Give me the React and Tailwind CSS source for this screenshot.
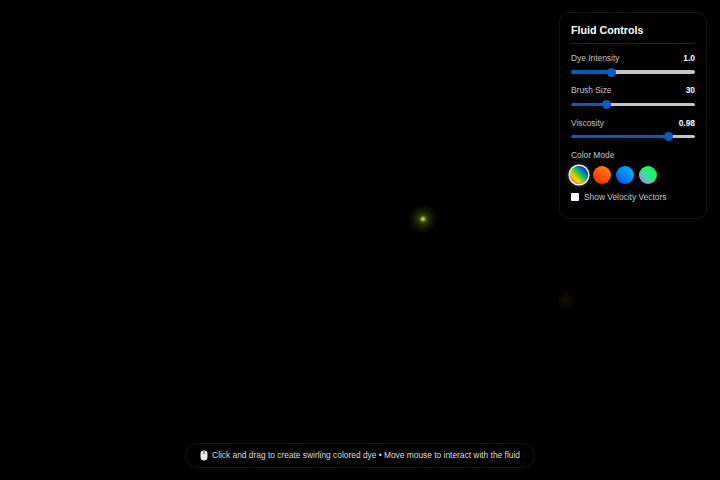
import React, { useState } from "react";

const sliders = [
  { label: "Dye Intensity", value: "1.0", pos: 31 },
  { label: "Brush Size", value: "30", pos: 27 },
  { label: "Viscosity", value: "0.98", pos: 81 },
];

const swatches = [
  "bg-[linear-gradient(45deg,#ff3a00,#ffd000_30%,#22c94a_55%,#0a6ae0_72%,#10106a)] ring-[1.5px] ring-white shadow-[0_0_5px_2px_rgba(255,255,255,0.25)]",
  "bg-[linear-gradient(30deg,#ff2000,#ff9000)]",
  "bg-[linear-gradient(45deg,#0050ff,#00bfff)]",
  "bg-[linear-gradient(45deg,#d050ff,#80a0e0_22%,#30e890_45%,#20f060_70%,#10e0a0)]",
];

const Slider = ({ label, value, pos }) => {
  // fill stops under the middle of the 9px thumb on the 124px track
  const fill = (4.5 + pos * 1.15) / 1.24;

  return (
    <div className="mb-[10.5px]">
      <div className="flex justify-between text-[8.4px] leading-[12px] text-[#c4c4c4]">
        <span>{label}</span>
        <span className="font-bold text-white">{value}</span>
      </div>
      <input
        type="range"
        defaultValue={pos}
        step="0.5"
        style={{ background: `linear-gradient(to right, #0a5cb8 ${fill}%, #c4c4c4 ${fill}%)` }}
        className="mt-[6.25px] block h-[3.5px] w-full cursor-pointer appearance-none rounded-full [&::-webkit-slider-thumb]:h-[9px] [&::-webkit-slider-thumb]:w-[9px] [&::-webkit-slider-thumb]:appearance-none [&::-webkit-slider-thumb]:rounded-full [&::-webkit-slider-thumb]:bg-[#0a5cc4]"
      />
    </div>
  );
};

const App = () => {
  const [active, setActive] = useState(0);

  return (
    <div className="relative h-[480px] w-[720px] overflow-hidden bg-black font-['Liberation_Sans',sans-serif]">
      {/* dye spots on the canvas */}
      <div className="absolute left-[409px] top-[205px] h-[28px] w-[28px] rounded-full bg-[radial-gradient(circle,#d0e820_0,#a0bc18_7%,#3a4a0a_16%,#1c2405_32%,#0a0d02_55%,transparent_85%)]" />
      <div className="absolute left-[558px] top-[291px] h-[20px] w-[16px] rounded-full bg-[radial-gradient(ellipse,#0e0c02_0,#070601_55%,transparent_80%)]" />

      <div className="absolute right-[13px] top-[12px] w-[148px] rounded-[10px] border border-[#141414] bg-black px-[11px] pb-[15px] pt-[11px]">
        <h2 className="border-b border-[#222222] pb-[6px] text-[10.7px] font-bold leading-[13px] text-white">
          Fluid Controls
        </h2>
        <div className="mt-[8px]">
          {sliders.map((s) => (
            <Slider key={s.label} {...s} />
          ))}
        </div>
        <div className="text-[8.4px] leading-[12px] text-[#c4c4c4]">Color Mode</div>
        <div className="-ml-[0.75px] mt-[5px] flex gap-[5px]">
          {swatches.map((cls, i) => (
            <button
              key={i}
              onClick={() => setActive(i)}
              className={`h-[18px] w-[18px] rounded-full ${cls}`}
              aria-pressed={active === i}
            />
          ))}
        </div>
        <label className="mt-[7.5px] flex items-center gap-[5px] text-[8.4px] leading-[12px] text-[#c4c4c4]">
          <input type="checkbox" className="h-[8px] w-[8px] appearance-none rounded-[1px] bg-white" />
          Show Velocity Vectors
        </label>
      </div>

      <div className="absolute bottom-[12px] left-[185px] flex h-[25px] w-[350px] items-center justify-center gap-[4px] rounded-full border border-[#141414] bg-black text-[8.4px] text-[#dddddd]">
        <svg width="8" height="11" viewBox="0 0 8 11">
          <rect x="0.5" y="0.5" width="7" height="10" rx="3.5" fill="#e8e8e8" />
          <rect x="3.4" y="1.5" width="1.2" height="2.5" fill="#555555" />
        </svg>
        <span>Click and drag to create swirling colored dye • Move mouse to interact with the fluid</span>
      </div>
    </div>
  );
};

export default App;
